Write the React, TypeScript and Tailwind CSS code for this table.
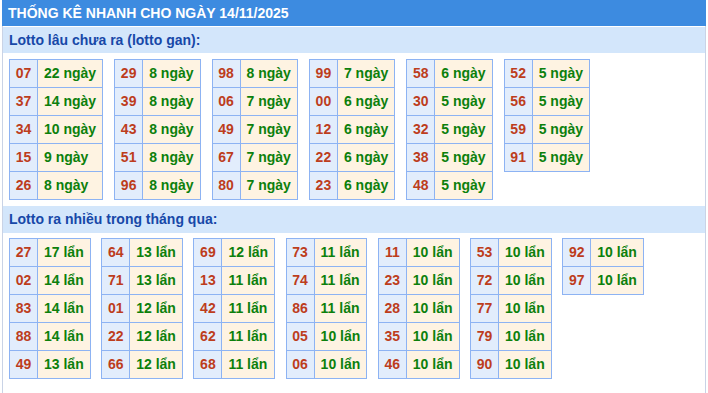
import React from "react";

type Row = [string, string];

const ganTables: Row[][] = [
  [["07", "22"], ["37", "14"], ["34", "10"], ["15", "9"], ["26", "8"]],
  [["29", "8"], ["39", "8"], ["43", "8"], ["51", "8"], ["96", "8"]],
  [["98", "8"], ["06", "7"], ["49", "7"], ["67", "7"], ["80", "7"]],
  [["99", "7"], ["00", "6"], ["12", "6"], ["22", "6"], ["23", "6"]],
  [["58", "6"], ["30", "5"], ["32", "5"], ["38", "5"], ["48", "5"]],
  [["52", "5"], ["56", "5"], ["59", "5"], ["91", "5"]],
];

const hotTables: Row[][] = [
  [["27", "17"], ["02", "14"], ["83", "14"], ["88", "14"], ["49", "13"]],
  [["64", "13"], ["71", "13"], ["01", "12"], ["22", "12"], ["66", "12"]],
  [["69", "12"], ["13", "11"], ["42", "11"], ["62", "11"], ["68", "11"]],
  [["73", "11"], ["74", "11"], ["86", "11"], ["05", "10"], ["06", "10"]],
  [["11", "10"], ["23", "10"], ["28", "10"], ["35", "10"], ["46", "10"]],
  [["53", "10"], ["72", "10"], ["77", "10"], ["79", "10"], ["90", "10"]],
  [["92", "10"], ["97", "10"]],
];

function LotoTable({ rows, unit }: { rows: Row[]; unit: string }) {
  return (
    <div className="flex flex-col border-l border-t border-[#8db3f3]">
      {rows.map(([num, count]) => (
        <div key={num} className="flex h-[28px]">
          <div className="flex w-[28px] items-center justify-center border-b border-r border-[#8db3f3] bg-[#e2edfc] text-[#bd3d1c]">
            {num}
          </div>
          <div className="flex flex-1 items-center whitespace-nowrap border-b border-r border-[#8db3f3] bg-[#fef3e2] px-[6px] text-[#0c800c]">
            {count} {unit}
          </div>
        </div>
      ))}
    </div>
  );
}

export default function App() {
  return (
    <div className="flex h-[393px] flex-col bg-white font-['Liberation_Sans',Arial,sans-serif] text-[14px] font-bold">
      {/* title bar */}
      <div className="ml-[2px] flex h-[26px] w-[704px] items-center bg-[#3d8be0] pl-[6px] text-white">
        THỐNG KÊ NHANH CHO NGÀY 14/11/2025
      </div>

      <div className="ml-[2px] w-[704px] flex-1 border-x border-[#c9d3e6]">
        {/* lotto gan */}
        <div className="mt-[1px] flex h-[26px] items-center bg-[#d3e6fb] pl-[6px] text-[#1748a8]">
          Lotto lâu chưa ra (lotto gan):
        </div>
        <div className="mt-[6px] flex items-start gap-[11px] pl-[6px]">
          {ganTables.map((rows, i) => (
            <LotoTable key={i} rows={rows} unit="ngày" />
          ))}
        </div>

        {/* lotto ra nhieu */}
        <div className="mt-[6px] flex h-[27px] items-center bg-[#d3e6fb] pl-[6px] text-[#1748a8]">
          Lotto ra nhiều trong tháng qua:
        </div>
        <div className="mt-[5px] flex items-start gap-[10.5px] pl-[6px]">
          {hotTables.map((rows, i) => (
            <LotoTable key={i} rows={rows} unit="lẩn" />
          ))}
        </div>
      </div>
    </div>
  );
}
